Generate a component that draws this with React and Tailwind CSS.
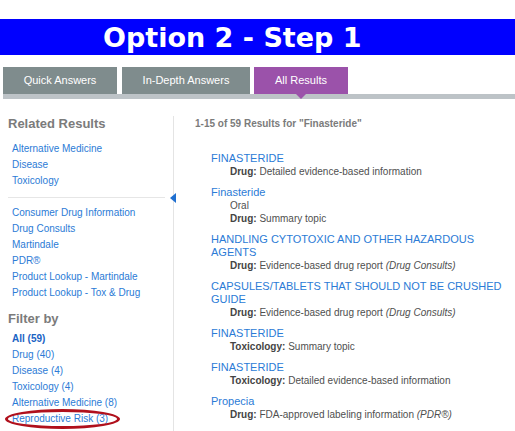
import React from 'react'

const RELATED = ['Alternative Medicine', 'Disease', 'Toxicology']

const SOURCES = [
  'Consumer Drug Information',
  'Drug Consults',
  'Martindale',
  'PDR®',
  'Product Lookup - Martindale',
  'Product Lookup - Tox & Drug',
]

const FILTERS = [
  { label: 'All (59)', bold: true },
  { label: 'Drug (40)' },
  { label: 'Disease (4)' },
  { label: 'Toxicology (4)' },
  { label: 'Alternative Medicine (8)' },
  { label: 'Reproductive Risk (3)', circled: true },
]

const RESULTS = [
  { title: 'FINASTERIDE', lines: [{ k: 'Drug:', v: 'Detailed evidence-based information' }] },
  { title: 'Finasteride', lines: [{ v: 'Oral' }, { k: 'Drug:', v: 'Summary topic' }] },
  {
    title: 'HANDLING CYTOTOXIC AND OTHER HAZARDOUS AGENTS',
    lines: [{ k: 'Drug:', v: 'Evidence-based drug report', i: '(Drug Consults)' }],
  },
  {
    title: 'CAPSULES/TABLETS THAT SHOULD NOT BE CRUSHED GUIDE',
    lines: [{ k: 'Drug:', v: 'Evidence-based drug report', i: '(Drug Consults)' }],
  },
  { title: 'FINASTERIDE', lines: [{ k: 'Toxicology:', v: 'Summary topic' }] },
  { title: 'FINASTERIDE', lines: [{ k: 'Toxicology:', v: 'Detailed evidence-based information' }] },
  { title: 'Propecia', lines: [{ k: 'Drug:', v: 'FDA-approved labeling information', i: '(PDR®)' }] },
]

export default function App() {
  return (
    <div className="w-[515px] h-[431px] overflow-hidden bg-white font-['Liberation_Sans',Arial,sans-serif]">
      {/* title bar */}
      <div className="pt-[19px]">
        <div className="h-[36px] bg-[#0000ff] flex items-center pl-[103px] text-white font-bold text-[27px] font-['DejaVu_Sans',Verdana,sans-serif] leading-none">
          Option 2 - Step 1
        </div>
      </div>

      {/* tabs */}
      <div className="mt-[12px] pl-[3px]">
        <div className="flex h-[27px] text-[11px] text-white">
          <div className="w-[114px] bg-[#7f8c8d] flex items-center justify-center">Quick Answers</div>
          <div className="ml-[5px] w-[128px] bg-[#7f8c8d] flex items-center justify-center">In-Depth Answers</div>
          <div className="relative ml-[4px] w-[94px] bg-[#9b52aa] flex items-center justify-center">
            All Results
            <div className="absolute left-[42px] top-[27px] w-0 h-0 border-l-[5px] border-r-[5px] border-t-[5px] border-l-transparent border-r-transparent border-t-[#9b52aa]" />
          </div>
        </div>
        <div className="h-[5px] bg-[#bdc3c7]" />
      </div>

      <div className="flex mt-[17px]">
        {/* sidebar */}
        <div className="relative w-[174px] h-[320px] border-r border-[#e4e4e4] px-[8px] shrink-0">
          <div className="text-[13px] leading-[16px] font-bold text-[#7b7b7b]">Related Results</div>
          <div className="mt-[9px] pl-[4px]">
            {RELATED.map((r) => (
              <div key={r} className="text-[10px] leading-[16px] text-[#2b7bd6]">{r}</div>
            ))}
          </div>
          <div className="mt-[8px] border-t border-[#e6e6e6]" />
          <div className="mt-[7px] pl-[4px]">
            {SOURCES.map((s) => (
              <div key={s} className="text-[10px] leading-[16px] text-[#2b7bd6]">{s}</div>
            ))}
          </div>
          <div className="mt-[10px] text-[13px] leading-[16px] font-bold text-[#7b7b7b]">Filter by</div>
          <div className="mt-[4px] pl-[4px]">
            {FILTERS.map((f) => (
              <div key={f.label} className="relative">
                <div className={`text-[10px] leading-[16px] ${f.bold ? 'font-bold text-[#1a63c4]' : 'text-[#2b7bd6]'}`}>
                  {f.label}
                </div>
                {f.circled && (
                  <div className="absolute left-[-7px] top-[-2px] w-[115px] h-[20px] rounded-[50%] border-[3px] border-[#b0101c]" />
                )}
              </div>
            ))}
          </div>
          <div className="absolute right-[-3px] top-[77px] w-0 h-0 border-t-[5px] border-b-[5px] border-r-[6px] border-t-transparent border-b-transparent border-r-[#1f6fd0]" />
        </div>

        {/* results */}
        <div className="flex-1 pl-[21px] pr-[4px]">
          <div className="mt-[1px] text-[10px] leading-[14px] font-bold text-[#7b7b7b]">
            1-15 of 59 Results for "Finasteride"
          </div>
          <div className="mt-[21px] pl-[16px] flex flex-col gap-[8px]">
            {RESULTS.map((r, idx) => (
              <div key={idx}>
                <div className="text-[11px] leading-[13px] text-[#2b7bd6]">{r.title}</div>
                {r.lines.map((l, j) => (
                  <div key={j} className="pl-[19px] text-[10px] leading-[13px] text-[#4f4f4f]">
                    {l.k && <span className="font-bold text-[#444444]">{l.k} </span>}
                    {l.v}
                    {l.i && <span className="italic"> {l.i}</span>}
                  </div>
                ))}
              </div>
            ))}
          </div>
        </div>
      </div>
    </div>
  )
}
